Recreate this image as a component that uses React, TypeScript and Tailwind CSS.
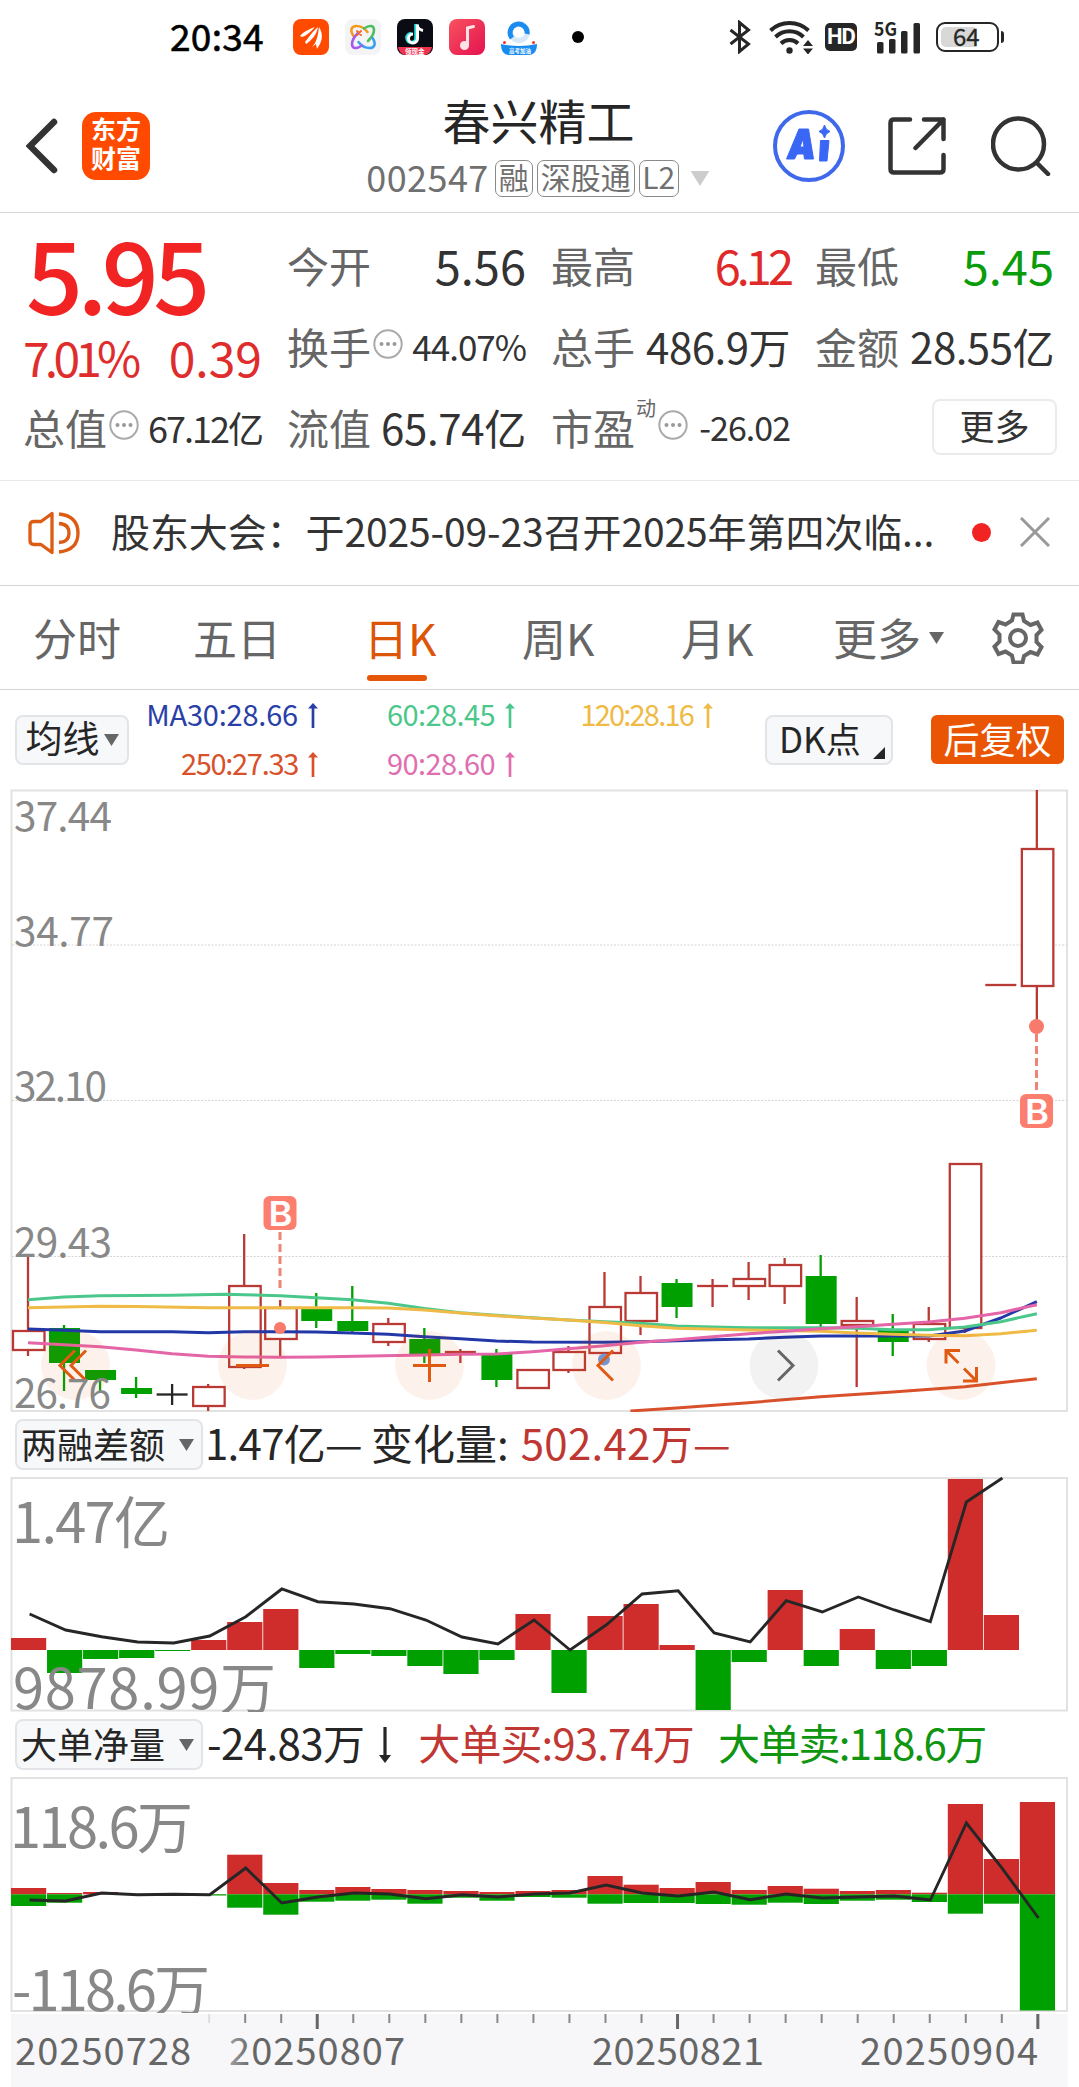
import type { ReactNode } from "react";

type Candle = {
  kind: "up" | "down" | "flat";
  high: number;
  top: number;
  bottom: number;
  low: number;
};

const RED = "#b93a35";
const GREEN = "#00a000";
const BAR_RED = "#cf2d2c";

// one trading day is 36px wide
const STEP = 36.03;
const cx = (i: number) => 28 + i * STEP;

const c = (
  kind: Candle["kind"],
  high: number,
  top: number,
  bottom: number,
  low: number
): Candle => ({ kind, high, top, bottom, low });

const candles: Candle[] = [
  c("up", 1257, 1331, 1350, 1356),
  c("down", 1325, 1328, 1363, 1391),
  c("down", 1370, 1370, 1380, 1391),
  c("down", 1377, 1388, 1394, 1398),
  c("flat", 1384, 1394.5, 1394.5, 1405),
  c("up", 1384, 1387, 1406, 1411),
  c("up", 1234, 1286, 1367, 1369),
  c("up", 1300, 1308, 1339, 1357),
  c("down", 1293, 1308, 1321, 1328),
  c("down", 1286, 1321, 1331, 1334),
  c("up", 1318, 1324, 1342, 1346),
  c("down", 1328, 1339, 1354, 1363),
  c("up", 1349, 1352, 1352, 1363),
  c("down", 1349, 1353, 1380, 1387),
  c("up", 1370, 1370, 1388, 1388),
  c("up", 1346, 1352, 1370, 1373),
  c("up", 1272, 1307, 1353, 1363),
  c("up", 1276, 1293, 1321, 1335),
  c("down", 1279, 1283, 1307, 1318),
  c("up", 1279, 1286, 1286, 1307),
  c("up", 1262, 1279, 1286, 1300),
  c("up", 1258, 1265, 1286, 1304),
  c("down", 1255, 1276, 1324, 1327),
  c("up", 1297, 1321, 1325, 1387),
  c("down", 1314, 1330, 1342, 1356),
  c("up", 1307, 1324, 1339, 1342),
  c("up", 1164, 1164, 1328, 1333),
  c("up", 985, 985, 985, 985),
  c("up", 790, 849, 986, 1022),
];

const averages = [
  {
    color: "#d8512b",
    points: [[16.72, 1411], [18, 1408], [20, 1402.7], [22, 1396.7], [24, 1392], [26, 1386.7], [28, 1378.7]],
  },
  {
    color: "#2238a8",
    points: [
      [0, 1329], [1, 1330.3], [2, 1331.7], [4, 1331.7], [5, 1332.7], [6, 1331.7], [7, 1331.7], [8, 1332],
      [9, 1333], [10, 1334.3], [11, 1336.7], [12, 1338.7], [13, 1341], [14, 1342], [16, 1342.3], [17, 1341.7],
      [18, 1340.7], [19, 1339.7], [20, 1339], [21, 1337.3], [22, 1336], [25, 1336], [26, 1331], [27, 1318], [28, 1301.7],
    ],
  },
  {
    color: "#4cc78c",
    points: [
      [0, 1299.7], [1, 1297], [2, 1295.7], [4, 1295.3], [5.5, 1294.3], [6, 1294.7], [7, 1295.7], [8, 1297.7],
      [9, 1299.7], [10, 1303.3], [11, 1308.5], [12, 1312.7], [13, 1315.3], [14, 1317.7], [15, 1320], [16, 1321.7],
      [17, 1323.3], [18, 1326], [19, 1327], [20, 1327.7], [22, 1327.7], [23, 1328.3], [24, 1329.7], [25, 1329.7],
      [26, 1327], [27, 1321.7], [28, 1313.7],
    ],
  },
  {
    color: "#efba45",
    points: [
      [0, 1307.7], [2, 1306.3], [3, 1306.5], [5, 1307.7], [9, 1307.7], [10, 1308], [11, 1310], [12, 1313], [13, 1315.7],
      [14, 1318], [15, 1320], [16, 1322.5], [17, 1325.7], [18, 1328.3], [20, 1330], [22, 1331.3], [23, 1333],
      [24, 1334.3], [25, 1335.3], [26, 1335.7], [27, 1333.7], [28, 1330.3],
    ],
  },
  {
    color: "#e465a8",
    points: [
      [0, 1342.7], [1, 1344.7], [2, 1346.7], [3, 1350], [4, 1353.7], [5, 1356.3], [6, 1357], [7, 1357.3], [8, 1357],
      [11, 1355], [12, 1354.3], [13, 1354], [14, 1351.7], [15, 1348.7], [16, 1345.7], [17, 1342.3], [18, 1339.7],
      [19, 1336.7], [20, 1333.7], [21, 1331.3], [22, 1328.7], [23, 1326.7], [24, 1324.3], [25, 1322], [26, 1318.3],
      [27, 1312.7], [28, 1304.7],
    ],
  },
];

// bar ends, above the zero line at 1650 is a red bar
const marginBars = [
  1638, 1673, 1659, 1658, 1651, 1640, 1622, 1609, 1668, 1654, 1656, 1666, 1674, 1660, 1614,
  1693, 1616, 1604, 1645, 1710, 1662, 1590, 1666, 1629, 1669, 1666, 1479, 1615,
];
const marginLine = [
  1614, 1630, 1636.7, 1642, 1643, 1636, 1616.7, 1589, 1601.7, 1604, 1608.7, 1620, 1637, 1644, 1620,
  1650, 1625, 1594, 1590.7, 1633, 1642, 1600.7, 1612, 1597, 1610, 1621.7, 1502, 1478,
];

const orderBars = [
  [1888, 1906], [1893, 1902.7], [1892, 1894], [1894, 1894], [1894, 1894], [1894, 1895.5], [1854.7, 1907.7],
  [1883, 1914.7], [1890, 1901.7], [1887, 1900.7], [1889, 1899.7], [1890, 1903.7], [1891, 1897.7], [1892, 1900.7],
  [1891, 1897], [1890, 1897.7], [1876, 1903.7], [1884.7, 1903], [1888, 1903], [1882, 1904], [1890, 1904.7],
  [1886, 1902.7], [1888.7, 1904], [1891, 1900.7], [1890, 1899.7], [1892.7, 1902], [1804, 1913.7], [1859, 1903.7],
  [1802, 2010.5],
];
const orderLine = [
  1900, 1901, 1893, 1894.7, 1894.3, 1894.7, 1868, 1903, 1897, 1893, 1894, 1898.7, 1894.7, 1897, 1894,
  1893, 1885, 1893, 1896, 1892, 1899.7, 1894, 1898, 1897, 1896, 1900, 1823, 1868.7, 1918,
];

const toPoints = (ys: number[]) =>
  ys.map((y, i) => `${29.6 + i * STEP},${y}`).join(" ");

function Arrow({ down = false }: { down?: boolean }) {
  return (
    <svg
      viewBox="0 0 12 36"
      preserveAspectRatio="none"
      className={down ? "h-9 w-3 rotate-180" : "h-[25px] w-2.5"}
      fill="currentColor"
    >
      <path d="M6 0l6 8H7.6v28H4.4V8H0z" />
    </svg>
  );
}

function Triangle({ className }: { className: string }) {
  return (
    <svg viewBox="0 0 15 12" className={className} fill="currentColor">
      <path d="M0 0h15L7.5 12z" />
    </svg>
  );
}

function Info() {
  return (
    <svg viewBox="0 0 30 30" className="mb-1 ml-0.5 h-[30px] w-[30px] shrink-0">
      <circle cx="15" cy="15" r="13.7" fill="none" stroke="#aaa" strokeWidth="2" />
      <circle cx="8.5" cy="15" r="2" fill="#999" />
      <circle cx="15" cy="15" r="2" fill="#999" />
      <circle cx="21.5" cy="15" r="2" fill="#999" />
    </svg>
  );
}

function StatusBar() {
  return (
    <div className="flex h-[74px] items-center pl-[170px] pr-[75px]">
      <span className="w-[123px] pb-1 text-[37px] leading-none tracking-[0.3px] text-black [-webkit-text-stroke:0.6px]">
        20:34
      </span>

      <div className="flex items-center gap-4">
        <svg viewBox="0 0 36 36" className="h-9 w-9">
          <rect width="36" height="36" rx="8" fill="#ff4a00" />
          <path d="M7 17c4-5 10-7 15-9-4 4-7 8-13 10zM12 23c4-5 7-10 13-15-1 7-6 13-12 17zM19 28c5-5 6-12 7-20 5 8 3 15-2 22l-1-5z" fill="#fff" />
        </svg>

        {/* four petals, one colour each */}
        <svg viewBox="0 0 36 36" className="h-9 w-9" fill="none" strokeWidth="2.600" strokeLinecap="round">
          <rect width="36" height="36" rx="8" fill="#f4f4f7" />
          <path d="M8.500 17c-4-6-2-10 3-10 4 0 8 2 11 6" stroke="#f39a1e" />
          <path d="M19 9.500c6-4 10-3 10 1.500 0 4-3 8-6 11" stroke="#4bbf5f" />
          <path d="M27.500 19c4 6 2 10-3 10-4 0-8-2-11-6" stroke="#3aa0ee" />
          <path d="M17 26.500c-6 4-10 3-10-1.500 0-4 3-8 6-11" stroke="#a55bea" />
          <path d="M12 12l4 4M16 12l-4 4" stroke="#f06a3c" strokeWidth="2" />
        </svg>

        <svg viewBox="0 0 36 36" className="h-9 w-9">
          <rect width="36" height="36" rx="8" fill="#0b0b14" />
          <path d="M19 5v14a4.500 4.500 0 1 1-4.500-4.500" fill="none" stroke="#25e5e0" strokeWidth="3.500" />
          <path d="M20.500 5.500v14a4.500 4.500 0 1 1-4.500-4.500M20 6c1 4 3 5 6 5.500" fill="none" stroke="#fff" strokeWidth="3" />
          <path d="M1 28h34c-1 5-4 8-8 8H9c-4 0-7-3-8-8z" fill="#f0334f" />
          <text x="8" y="34.500" fontSize="6.500" fontWeight="700" fill="#fff">领现金</text>
        </svg>

        <svg viewBox="0 0 36 36" className="h-9 w-9">
          <defs>
            <linearGradient id="music" x1="0" y1="0" x2="1" y2="1">
              <stop offset="0" stopColor="#f9525f" />
              <stop offset="1" stopColor="#e3124f" />
            </linearGradient>
          </defs>
          <rect width="36" height="36" rx="8" fill="url(#music)" />
          <path d="M18.500 26V9l6-1.500" fill="none" stroke="#fde3e6" strokeWidth="3" strokeLinecap="round" />
          <circle cx="15.500" cy="26.500" r="4.500" fill="#fde3e6" />
        </svg>

        <svg viewBox="0 0 36 36" className="h-9 w-9">
          <circle cx="18" cy="13" r="8.500" fill="none" stroke="#d5e9fb" strokeWidth="5" />
          <path d="M11 19a8.500 8.500 0 1 1 15-4" fill="none" stroke="#1c8cf0" strokeWidth="5" />
          <path d="M0 25q18 4 36 0c0 7-3 11-8 11H8c-5 0-8-4-8-11z" fill="#178bf0" />
          <circle cx="3.500" cy="23.500" r="1.500" fill="#e33" />
          <circle cx="32.500" cy="23.500" r="1.500" fill="#e33" />
          <text x="8" y="34" fontSize="5.500" fontWeight="700" fill="#fff">高考加油</text>
        </svg>
      </div>

      <span className="ml-[35px] h-3 w-3 rounded-full bg-black" />

      <div className="ml-auto flex items-center text-[#262626]">
        <svg viewBox="0 0 22 34" className="h-[34px] w-[22px]" fill="none" stroke="currentColor" strokeWidth="3">
          <path d="M1.500 10l18 14-9 7.500v-29l9 7.500-18 14" />
        </svg>

        <svg viewBox="0 0 44 34" className="ml-[18px] h-[34px] w-11" fill="none" stroke="currentColor" strokeWidth="4">
          <path d="M1.500 10.500a28 28 0 0 1 38 0" />
          <path d="M6.500 17a20 20 0 0 1 28 0" />
          <path d="M12 23.500a12 12 0 0 1 17 0" />
          <circle cx="20.500" cy="30.500" r="3.200" fill="currentColor" stroke="none" />
          <path d="M34 26l5-6 5 6zM34 28.500l5 6 5-6z" fill="currentColor" stroke="none" />
        </svg>

        <span className="ml-3 flex h-7 w-8 items-center justify-center rounded-[5px] bg-[#262626] font-[Roboto] text-[22px] font-bold leading-none tracking-[-1px] text-white">
          HD
        </span>

        <svg viewBox="0 0 48 34" className="ml-[17px] h-[34px] w-12 overflow-visible" fill="currentColor">
          <text x="0" y="15.500" fontSize="19" fontWeight="700" textLength="23" lengthAdjust="spacingAndGlyphs">5G</text>
          <rect x="3" y="22" width="6.500" height="11.500" rx="1.500" />
          <rect x="15" y="19" width="6.500" height="14.500" rx="1.500" />
          <rect x="27" y="11" width="6.500" height="22.500" rx="1.500" />
          <rect x="39.500" y="3" width="6.500" height="30.500" rx="1.500" />
        </svg>

        <span className="ml-[14px] flex h-[30px] w-[63px] rounded-[9px] border-2 border-[#262626] p-[3px]">
          <span className="flex w-[34px] rounded-l-[5px] bg-[#d8d8d8] pl-[12px] text-[24px] leading-[18px] [-webkit-text-stroke:0.3px]">
            64
          </span>
        </span>
        <span className="ml-0.5 h-3 w-[3px] rounded-r bg-[#262626]" />
      </div>
    </div>
  );
}

function Tag({ children, className }: { children: ReactNode; className: string }) {
  return (
    <span
      className={`flex h-[37px] items-center justify-center rounded-[7px] border-[1.5px] border-[#8a8a8a] pb-1 text-[30px] leading-none ${className}`}
    >
      {children}
    </span>
  );
}

function Header() {
  return (
    <div className="grid h-[139px] grid-cols-[1fr_auto_1fr] items-center border-b border-[#d6d6d6] pl-[26px] pr-[28px]">
      <div className="flex items-center pt-1.5">
        <svg viewBox="0 0 32 56" className="h-14 w-8" fill="none" stroke="#333" strokeWidth="6.500" strokeLinecap="round">
          <path d="M28 4L4 28l24 24" />
        </svg>

        <div className="ml-6 flex h-[68px] w-[68px] flex-col items-center justify-center rounded-[14px] bg-[#ff4a00] pb-1.5 text-[25px] font-bold leading-[29px] text-white">
          <span>东方</span>
          <span>财富</span>
        </div>
      </div>

      <div className="flex flex-col items-center pt-0.5">
        <h1 className="mb-2.5 text-[48px] leading-[58px] text-[#262626]">春兴精工</h1>

        <div className="flex items-center text-[#707070]">
          <span className="mr-1.5 pb-1 text-[36px] leading-none tracking-[0.4px]">002547</span>
          <Tag className="w-[38px]">融</Tag>
          <Tag className="ml-1 w-[98px]">深股通</Tag>
          <Tag className="ml-1 w-[40px]">L2</Tag>
          <Triangle className="ml-2.5 h-[15px] w-[22px] text-[#ccc]" />
        </div>
      </div>

      <div className="flex items-center justify-end pt-1.5">
        <svg viewBox="0 0 72 74" className="h-[74px] w-[72px]">
          <circle cx="36" cy="37" r="34" fill="#fff" stroke="#3f69ea" strokeWidth="4" />
          <g fill="#3a66f6">
            <path d="M26 20h9.500l5 30h-9l-.7-5H24l-2.500 5H13.500zM27 38h4l-1-8z" fillRule="evenodd" strokeLinejoin="round" stroke="#3a66f6" />
            <path d="M47.500 31.500h8.500l-2 20.500h-7.500z" strokeLinejoin="round" stroke="#3a66f6" />
            <path d="M51.500 16q1 5 5.500 6.500-4.500 1.500-5.500 6.500-1-5-5.500-6.500 4.500-1.500 5.500-6.500z" stroke="#3a66f6" />
          </g>
        </svg>

        <svg viewBox="0 0 58 58" className="ml-[43px] h-[58px] w-[58px]" fill="none" stroke="#333" strokeWidth="4.500" strokeLinecap="round" strokeLinejoin="round">
          <path d="M22 2.500H6q-3.500 0-3.500 3.500v46q0 3.500 3.500 3.500h46q3.500 0 3.500-3.500V38M55.500 22V2.500H36M55.500 2.500L27.500 31" />
        </svg>

        <svg viewBox="0 0 60 60" className="ml-[45px] h-[60px] w-[60px]" fill="none" stroke="#333" strokeWidth="4.500" strokeLinecap="round">
          <circle cx="27.500" cy="28" r="25.500" />
          <path d="M46 47l11 11" />
        </svg>
      </div>
    </div>
  );
}

function Quote({
  label,
  value,
  valueClass,
  info = false,
  sup,
}: {
  label: string;
  value: string;
  valueClass: string;
  info?: boolean;
  sup?: string;
}) {
  return (
    <div className="-ml-0.5 flex h-[81px] items-center justify-between whitespace-nowrap pb-1.5 leading-none">
      <div className="flex items-center">
        <span className="text-[42px] text-[#666]">{label}</span>
        {sup && <span className="-mt-[38px] ml-px text-[20px] text-[#666]">{sup}</span>}
        {info && <Info />}
      </div>
      <span className={valueClass}>{value}</span>
    </div>
  );
}

function QuotePanel() {
  return (
    <div className="grid h-[268px] grid-cols-4 content-start gap-x-[27px] border-b border-[#e9e9e9] px-[25px] pt-[14px]">
      <div className="row-span-2 -ml-0.5 flex flex-col leading-none text-[#f22323]">
        <span className="-mt-[5px] ml-[3px] text-[100px] font-medium tracking-[-5.5px]">5.95</span>
        <div className="mt-[10px] flex justify-between text-[48px] text-[#df2d2d]">
          <span className="tracking-[-4.8px]">7.01%</span>
          <span>0.39</span>
        </div>
      </div>
      <Quote label="今开" value="5.56" valueClass="text-[47px] text-[#333]" />
      <Quote label="最高" value="6.12" valueClass="text-[47px] tracking-[-4px] text-[#e02a2a]" />
      <Quote label="最低" value="5.45" valueClass="text-[47px] text-[#0a9c0a]" />

      <Quote label="换手" value="44.07%" info valueClass="text-[35px] tracking-[-1px] text-[#333]" />
      <Quote label="总手" value="486.9万" valueClass="text-[42px] tracking-[-0.5px] text-[#333]" />
      <Quote label="金额" value="28.55亿" valueClass="text-[42px] tracking-[-0.5px] text-[#333]" />

      <Quote label="总值" value="67.12亿" info valueClass="text-[36px] tracking-[-2px] text-[#333]" />
      <Quote label="流值" value="65.74亿" valueClass="text-[42px] tracking-[-0.3px] text-[#333]" />
      <Quote label="市盈" value="-26.02" info sup="动" valueClass="text-[34px] tracking-[-1px] text-[#333]" />
      <button className="-mr-[3px] mt-[10px] flex h-14 w-[125px] items-center justify-center justify-self-end rounded-lg border-2 border-[#ebebed] pb-1.5 text-[35px] leading-none text-[#333]">
        更多
      </button>
    </div>
  );
}

function Notice() {
  return (
    <div className="flex h-[105px] items-center border-b border-[#d6d6d6] pl-[28px] pr-[29px]">
      <svg viewBox="0 0 52 44" className="h-11 w-[52px]" fill="none" stroke="#dc5c14" strokeWidth="3.300">
        <path d="M24 2.500L13 10.500H6Q2 10.500 2 14.500v15q0 4 4 4h7l11 8z" strokeLinejoin="round" />
        <path d="M31 3q19 2 19 19t-19 19" />
        <path d="M31 12.500q10 .5 10 9.500t-10 9.500" />
      </svg>

      <p className="ml-[31px] flex-1 whitespace-nowrap pb-1.5 text-[39px] leading-none tracking-[-0.1px] text-[#333]">
        股东大会：于2025-09-23召开2025年第四次临...
      </p>

      <span className="mb-0.5 h-[19px] w-[19px] rounded-full bg-[#f22323]" />
      <svg viewBox="0 0 30 30" className="mb-0.5 ml-[29px] h-[30px] w-[30px]" stroke="#999" strokeWidth="3">
        <path d="M1 1l28 28M29 1L1 29" />
      </svg>
    </div>
  );
}

const tabs = [
  { label: "分时", className: "w-[160px]" },
  { label: "五日", className: "w-[171px]" },
  { label: "日K", className: "w-[158px]", active: true },
  { label: "周K", className: "w-[159px]" },
  { label: "月K", className: "w-[152px]" },
];

function Tabs() {
  return (
    <div className="flex h-[104px] items-center border-b border-[#d6d6d6] pl-[33px] pr-[35px] text-[44px] leading-none text-[#666]">
      {tabs.map((tab) => (
        <div key={tab.label} className={`flex h-full flex-col pt-[29px] ${tab.className}`}>
          <span className={tab.active ? "text-[#dc5508]" : ""}>{tab.label}</span>
          {tab.active && (
            <span className="ml-[3px] mt-4 h-1.5 w-[60px] rounded-full bg-[#e65608]" />
          )}
        </div>
      ))}

      <span className="pb-0.5">更多</span>
      <Triangle className="ml-2 h-3 w-[15px]" />

      <svg viewBox="0 0 52 52" className="ml-auto h-[52px] w-[52px]" fill="none" stroke="#666" strokeWidth="4">
        <path d="M21.500 2.500h9l1.500 6.500 6.500 4 7-2.500 4 7.500-5 5v7l5 5-4 7.500-7-2.500-6.500 4-1.500 6.500h-9L20 43.500l-6.500-4-7 2.500-4-7.500 5-5v-7l-5-5 4-7.500 7 2.500 6.500-4z" />
        <circle cx="26" cy="26" r="8" />
      </svg>
    </div>
  );
}

function Average({ children, className }: { children: string; className: string }) {
  return (
    <span className={`flex items-center justify-end gap-2.5 ${className}`}>
      <span className="pb-1">{children}</span>
      <Arrow />
    </span>
  );
}

function AverageBar() {
  return (
    <div className="flex h-[99px] items-center pl-[15px] pr-[15px] leading-none">
      <button className="flex h-[50px] w-[114px] items-center justify-center gap-1 rounded-lg border-2 border-[#e3e4e8] bg-[#f7f8fa] text-[37px] text-[#262626]">
        <span className="pb-1">均线</span>
        <Triangle className="h-3 w-[15px] text-[#666]" />
      </button>

      <div className="grid h-full w-[585px] grid-cols-[189px_197px_198px] grid-rows-[49px_49px] pt-[1px] text-[29px]">
        <Average className="tracking-[-0.2px] text-[#2a3ea8]">MA30:28.66</Average>
        <Average className="tracking-[-0.6px] text-[#4cc78c]">60:28.45</Average>
        <Average className="tracking-[-1.8px] text-[#efba45]">120:28.16</Average>
        <Average className="tracking-[-1.3px] text-[#d8512b]">250:27.33</Average>
        <Average className="tracking-[-0.6px] text-[#e06fb0]">90:28.60</Average>
      </div>

      <button className="ml-[51px] flex h-[50px] w-[128px] items-center rounded-lg border-2 border-[#e3e4e8] bg-[#f7f8fa] pl-3 text-[35px] text-[#262626]">
        <span className="pb-1">DK点</span>
        <svg viewBox="0 0 12 12" className="ml-[12px] mt-[26px] h-3 w-3" fill="#262626">
          <path d="M12 0v12H0z" />
        </svg>
      </button>

      <button className="ml-auto flex h-[49px] w-[133px] items-center justify-center rounded-md bg-[#ea5504] pb-1 text-[36px] text-white">
        后复权
      </button>
    </div>
  );
}

function Marker({ x, y }: { x: number; y: number }) {
  return (
    <g>
      <rect x={x - 16.500} y={y - 17} width="33" height="34" rx="6" fill="#fb7e6e" />
      <text
        x={x - 11.500}
        y={y + 12.500}
        textLength="24"
        lengthAdjust="spacingAndGlyphs"
        fontFamily="Inter"
        fontSize="34"
        fontWeight="600"
        fill="#fff"
      >
        B
      </text>
    </g>
  );
}

function Frame({ top, bottom }: { top: number; bottom: number }) {
  return (
    <rect x="11.500" y={top} width="1055.500" height={bottom - top} fill="none" stroke="#e2e2e2" strokeWidth="2" />
  );
}

const prices = [
  { text: "37.44", y: 831, width: 98 },
  { text: "34.77", y: 946, width: 100 },
  { text: "32.10", y: 1101, width: 93 },
  { text: "29.43", y: 1257, width: 98 },
  { text: "26.76", y: 1408, width: 97 },
];

function CandleChart() {
  return (
    <svg viewBox="0 789 1079 623" className="block h-[623px] w-full">
      <Frame top={790.5} bottom={1411} />
      {[945, 1100.5, 1256.5].map((y) => (
        <path key={y} d={`M12 ${y}H1067`} stroke="#d5d5d5" strokeDasharray="2 1.500" />
      ))}

      {candles.map((d, i) => {
        const color = d.kind === "up" ? RED : d.kind === "down" ? GREEN : "#262626";
        const x = cx(i);
        const line = d.bottom - d.top < 1;
        return (
          <g key={i} stroke={color} strokeWidth="2.300">
            <path d={`M${x} ${d.high}V${d.top}M${x} ${d.bottom}V${d.low}`} />
            {line && <path d={`M${x - 15.500} ${d.top}h31`} />}
            {!line && d.kind === "up" && (
              <rect x={x - 15} y={d.top} width="31.500" height={d.bottom - d.top} fill="#fff" />
            )}
            {!line && d.kind === "down" && (
              <rect x={x - 15} y={d.top} width="31" height={d.bottom - d.top} fill={color} stroke="none" />
            )}
          </g>
        );
      })}

      {averages.map((ma) => (
        <polyline
          key={ma.color}
          points={ma.points.map(([i, y]) => `${cx(i)},${y}`).join(" ")}
          fill="none"
          stroke={ma.color}
          strokeWidth="3"
          strokeLinejoin="round"
        />
      ))}

      <g stroke="#ec8576" strokeWidth="3" strokeDasharray="8 4">
        <path d="M280 1232V1288" />
        <path d="M1036.500 1034V1092" />
      </g>
      <circle cx="280" cy="1328" r="6" fill="#f87a6a" />
      <circle cx="1036.500" cy="1026.500" r="7.500" fill="#f87a6a" />
      <circle cx="604" cy="1359.500" r="6" fill="#6c9be0" />
      <Marker x={280} y={1213} />
      <Marker x={1036.5} y={1111} />

      {/* floating chart controls */}
      <g fill="#ea5504" fillOpacity="0.08">
        <circle cx="75.500" cy="1365.500" r="34.500" />
        <circle cx="252.500" cy="1365.500" r="34.500" />
        <circle cx="429.500" cy="1365.500" r="34.500" />
        <circle cx="606.500" cy="1365.500" r="34.500" />
        <circle cx="784" cy="1365.500" r="34.500" fill="#000" fillOpacity="0.05" />
        <circle cx="961" cy="1365.500" r="34.500" />
      </g>
      <g fill="none" stroke="#e05a12" strokeWidth="3">
        <path d="M75 1350.500L60 1365.500l15 15M86 1350.500l-15 15 15 15" />
        <path d="M236 1365.500h33" />
        <path d="M413 1365.500h33M429.500 1349v33" />
        <path d="M613 1350.500l-15 15 15 15" />
        <path d="M778 1350.500l15 15-15 15" stroke="#666" />
        <path d="M960 1350.500h-14v13M946 1350.500l12.500 12.500M963 1381h13.500v-14M976.500 1381l-12.500-12.500" />
      </g>

      <g fontSize="40.500" fill="#888">
        {prices.map((p) => (
          <text key={p.text} x="14" y={p.y} textLength={p.width}>
            {p.text}
          </text>
        ))}
      </g>
    </svg>
  );
}

function IndicatorBar({ name, children }: { name: string; children: ReactNode }) {
  return (
    <div className="flex h-[65px] items-center whitespace-nowrap pl-[15px] text-[42px] leading-none text-[#262626]">
      <button className="mr-[3px] flex h-[51px] w-[188px] items-center rounded-lg border-2 border-[#e3e4e8] bg-[#f7f8fa] pl-1 text-[36px]">
        <span className="pb-1">{name}</span>
        <Triangle className="ml-[14px] h-3 w-[15px] text-[#666]" />
      </button>
      {children}
    </div>
  );
}

function MarginChart() {
  return (
    <svg viewBox="0 1477 1079 235" className="block h-[235px] w-full">
      <Frame top={1478} bottom={1710.5} />
      {marginBars.map((y, i) => (
        <rect
          key={i}
          x={11 + i * STEP}
          y={Math.min(y, 1650)}
          width="35.200"
          height={Math.abs(y - 1650)}
          fill={y < 1650 ? BAR_RED : GREEN}
        />
      ))}
      <polyline points={toPoints(marginLine)} fill="none" stroke="#262626" strokeWidth="2.900" />
      <g fontSize="56" fill="#888">
        <text x="12" y="1543" textLength="158">1.47亿</text>
        <text x="13" y="1709" textLength="263">9878.99万</text>
      </g>
    </svg>
  );
}

function OrderChart() {
  return (
    <svg viewBox="0 1777 1079 236" className="block h-[236px] w-full">
      <Frame top={1778} bottom={2011} />
      {orderBars.map(([top, bottom], i) => (
        <g key={i}>
          <rect x={11 + i * STEP} y={top} width="35.200" height={1894.3 - top} fill={BAR_RED} />
          <rect x={11 + i * STEP} y="1894.300" width="35.200" height={Math.max(bottom - 1894.3, 0)} fill={GREEN} />
        </g>
      ))}
      <polyline points={toPoints(orderLine)} fill="none" stroke="#262626" strokeWidth="2.900" />
      <g fontSize="56" fill="#888">
        <text x="10" y="1848" textLength="183">118.6万</text>
        <text x="12" y="2011" textLength="198">-118.6万</text>
      </g>
    </svg>
  );
}

function DateAxis() {
  const ticks = Array.from({ length: 24 }, (_, i) => i + 5);
  return (
    <svg viewBox="0 2013 1079 74" className="block h-[74px] w-full">
      <defs>
        <linearGradient id="fade" gradientUnits="userSpaceOnUse" x1="225" y1="0" x2="252" y2="0">
          <stop offset="0" stopColor="#aaa" />
          <stop offset="1" stopColor="#666" />
        </linearGradient>
      </defs>
      <rect x="11" y="2014" width="1057" height="73" fill="#f7f7f9" />
      {ticks.map((i) => {
        const major = i % 10 === 8;
        return (
          <rect
            key={i}
            x={cx(i) + (major ? -0.5 : 0)}
            y="2014"
            width={major ? 3 : 2}
            height={major ? 15 : 9}
            fill={i === 5 ? "#ddd" : major ? "#666" : "#888"}
          />
        );
      })}
      <g fontSize="38" fill="#666">
        <text x="15" y="2065" textLength="176">20250728</text>
        <text x="229" y="2065" textLength="176" fill="url(#fade)">20250807</text>
        <text x="592" y="2065" textLength="172">20250821</text>
        <text x="860" y="2065" textLength="178">20250904</text>
      </g>
    </svg>
  );
}

export default function App() {
  return (
    <div className="h-[2087px] w-[1079px] overflow-hidden bg-white font-['Noto_Sans_CJK_SC',sans-serif]">
      <StatusBar />
      <Header />
      <QuotePanel />
      <Notice />
      <Tabs />
      <AverageBar />
      <CandleChart />

      <IndicatorBar name="两融差额">
        <span className="-ml-px pb-1.5 tracking-[-0.7px]">1.47亿—</span>
        <span className="ml-[9px] pb-1.5">变化量:</span>
        <span className="ml-3 pb-1.5 tracking-[0.3px] text-[#bf3733]">502.42万—</span>
      </IndicatorBar>
      <MarginChart />

      <IndicatorBar name="大单净量">
        <span className="ml-px pb-1.5 tracking-[-0.6px]">-24.83万</span>
        <span className="ml-[15px]">
          <Arrow down />
        </span>
        <span className="ml-[27px] pb-1.5 tracking-[-0.9px] text-[#c03733]">大单买:93.74万</span>
        <span className="ml-6 pb-1.5 tracking-[-1.7px] text-[#0f950f]">大单卖:118.6万</span>
      </IndicatorBar>
      <OrderChart />
      <DateAxis />
    </div>
  );
}
